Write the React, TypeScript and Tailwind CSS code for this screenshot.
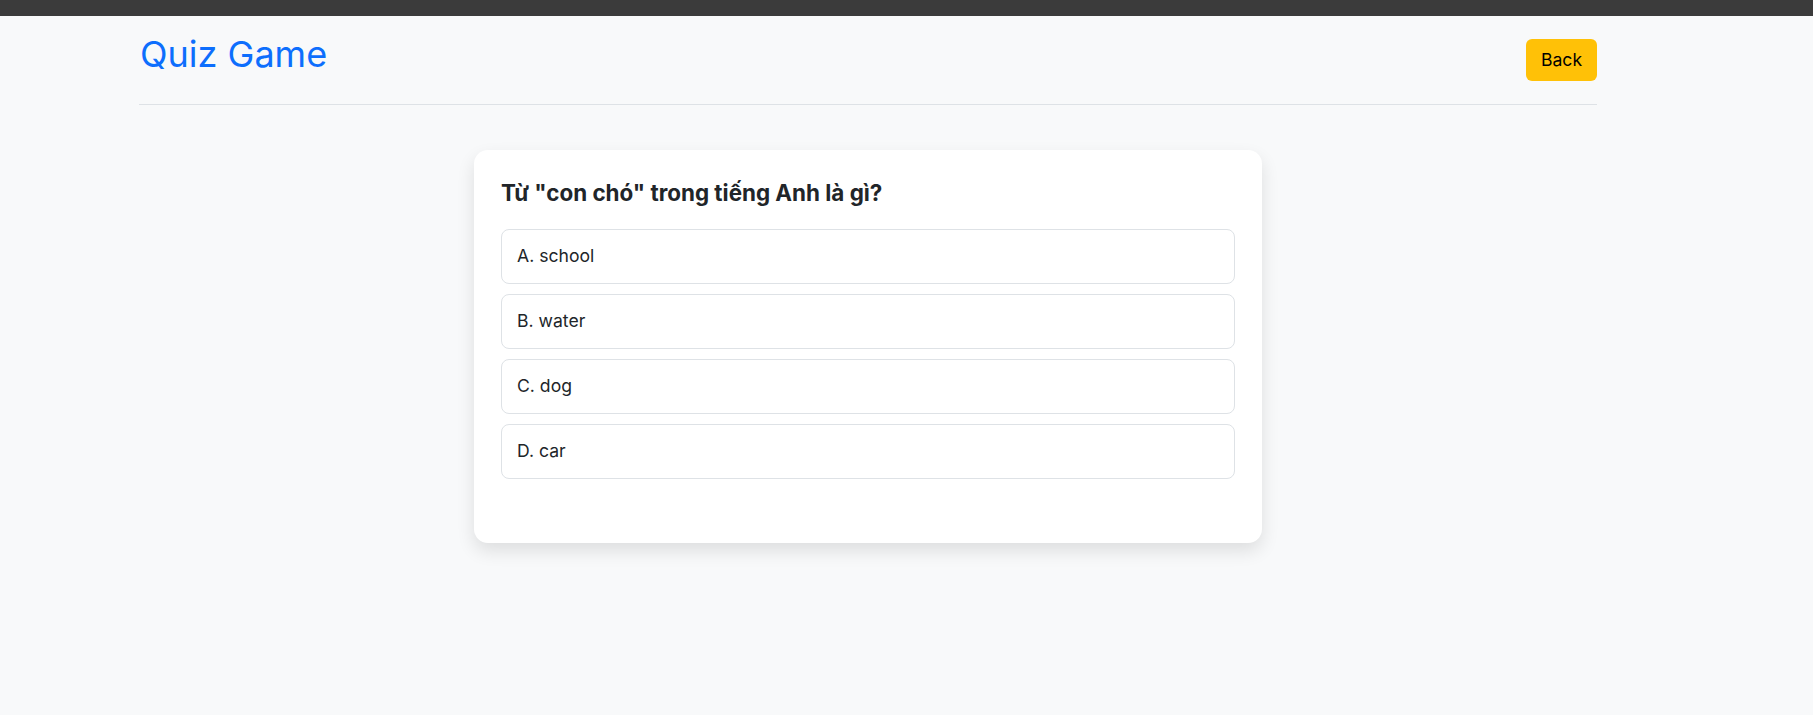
import React from "react";

const options = ["A. school", "B. water", "C. dog", "D. car"];

export default function App() {
  return (
    <div
      className="min-h-[715px] bg-[#f8f9fa] text-[#212529]"
      style={{ fontFamily: "Inter, 'Noto Sans', sans-serif" }}
    >
      {/* top strip */}
      <div className="h-4 bg-[#3b3b3b]" />

      <div className="ml-[139px] w-[1458px]">
        {/* header */}
        <header className="flex items-start justify-between border-b border-[#dee2e6] pt-[17px] pb-[23px]">
          <h1 className="ml-[1px] text-[36px] font-normal leading-[1.2] text-[#0d6efd]">Quiz Game</h1>
          <button className="mt-[6px] flex h-[42px] w-[71px] items-center justify-center rounded-[6px] bg-[#ffc107] text-[17.6px] text-black">
            Back
          </button>
        </header>

        {/* question card */}
        <main className="mt-[45px] flex justify-center">
          <div className="w-[788px] rounded-[14px] bg-white px-[27px] pt-[29px] pb-[64px] shadow-[0_8px_18px_rgba(0,0,0,0.11)]">
            <h2 className="mb-[21px] text-[22.4px] font-bold leading-[28.8px] text-[#212529]">
              Từ "con chó" trong tiếng Anh là gì?
            </h2>
            <div className="flex flex-col gap-[10px]">
              {options.map((opt) => (
                <div
                  key={opt}
                  className="flex h-[55px] items-center rounded-lg border border-[#dee2e6] bg-white px-[15px] text-[17.6px] text-[#212529]"
                >
                  {opt}
                </div>
              ))}
            </div>
          </div>
        </main>
      </div>
    </div>
  );
}
